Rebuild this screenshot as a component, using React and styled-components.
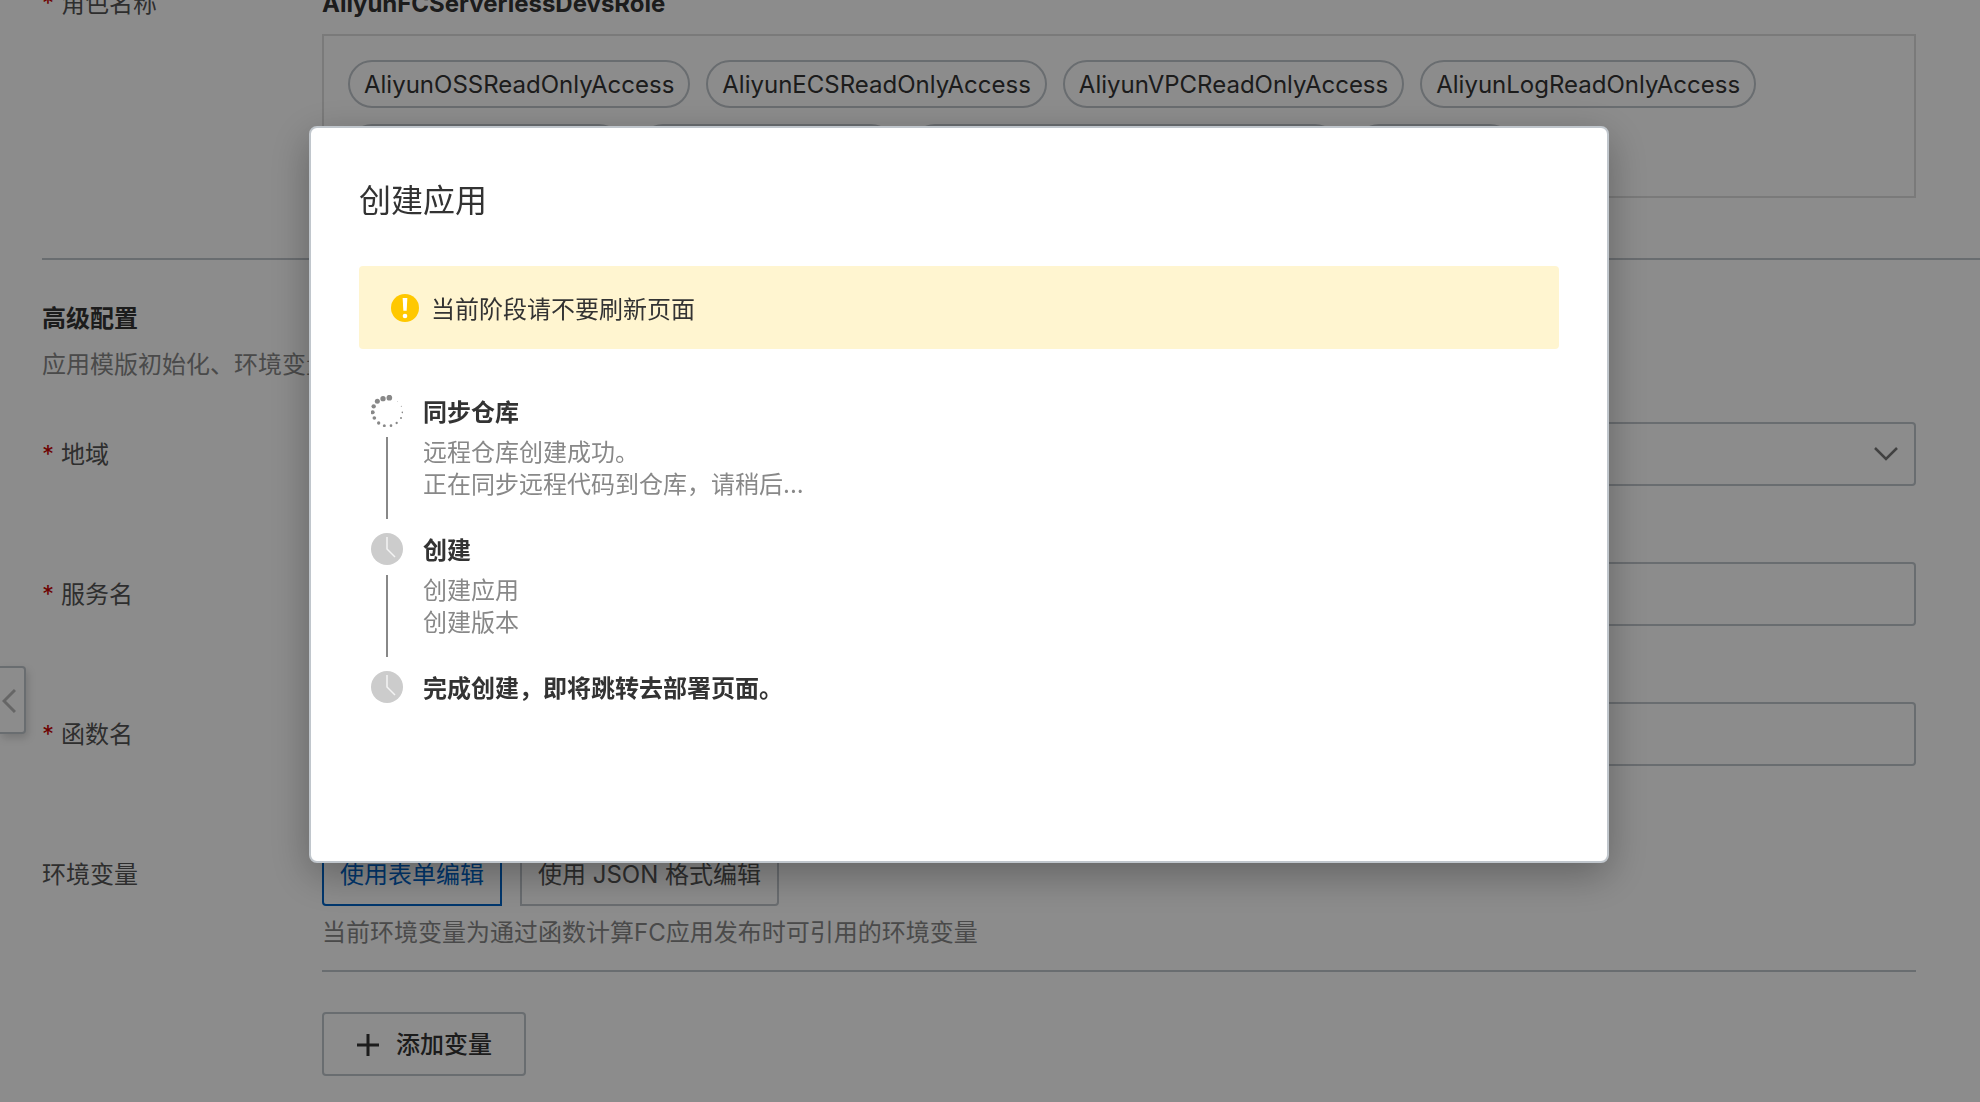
import React from "react";
import styled, { createGlobalStyle, css } from "styled-components";

const GlobalStyle = createGlobalStyle`
  *, *::before, *::after { box-sizing: border-box; }
  body {
    margin: 0;
    background: #fff;
    color: #333;
    font-family: Inter, "Noto Sans CJK SC", sans-serif;
    font-size: 24px;
    line-height: 32px;
  }
  button, input, select { font: inherit; color: inherit; }
  h1, h2, p, ul, ol, dl { margin: 0; padding: 0; }
`;

const Page = styled.main`
  position: relative;
  height: 100vh;
  overflow: hidden;
  padding-left: 42px;
`;

const Scrolled = styled.div`
  margin-top: -12px;
`;

const Row = styled.div`
  display: grid;
  grid-template-columns: 280px minmax(0, 1fr);
  align-items: start;
  padding-right: 64px;
`;

const Label = styled.label`
  display: flex;
  align-items: center;
  color: #555;
  height: ${(p) => (p.$tall ? "64px" : "32px")};
  padding-top: ${(p) => (p.$tall ? "2px" : "0")};

  ${(p) =>
    p.$required &&
    css`
      &::before {
        content: "*";
        width: 19px;
        color: #c80000;
      }
    `}
`;

const RoleName = styled.strong`
  display: block;
  font-weight: 700;
  margin-bottom: 14px;
`;

const PolicyBox = styled.ul`
  display: flex;
  flex-wrap: wrap;
  align-content: flex-start;
  gap: 16px;
  min-height: 164px;
  padding: 24px;
  border: 2px solid #dedede;
  list-style: none;
`;

const Policy = styled.li`
  height: 48px;
  padding: 7px 14px 5px;
  border: 2px solid #c0c6cc;
  border-radius: 24px;
`;

const SectionHead = styled.header`
  margin: 60px 0 41px;
  padding-top: 43px;
  border-top: 2px solid #c0c6cc;
`;

const SectionTitle = styled.h2`
  margin-bottom: 14px;
  font-size: 24px;
  line-height: 32px;
  font-weight: 600;
`;

const Muted = styled.p`
  color: #888;
`;

const Fields = styled.div`
  display: grid;
  gap: 76px;
`;

const control = css`
  width: 100%;
  height: 64px;
  padding: 0 16px;
  background: #fff;
  border: 2px solid #c0c6cc;
  border-radius: 4px;
`;

const TextInput = styled.input`
  ${control}
`;

const SelectWrap = styled.div`
  display: grid;
  align-items: center;

  > * { grid-area: 1 / 1; }
  > svg { justify-self: end; margin-right: 18px; pointer-events: none; }
`;

const Select = styled.select`
  ${control}
  appearance: none;
`;

const Modes = styled.div`
  display: flex;
  gap: 18px;
  margin-bottom: 11px;
`;

const ModeButton = styled.button`
  height: 64px;
  padding: 2px 16px 0;
  background: #fff;
  color: ${(p) => (p.$active ? "#0064c8" : "#555")};
  border: 2px solid ${(p) => (p.$active ? "#0064c8" : "#c0c6cc")};
  border-radius: ${(p) => (p.$active ? "4px 0 0 4px" : "0 4px 4px 0")};
`;

const Rule = styled.hr`
  margin: 21px 0 40px;
  border: 0;
  border-top: 2px solid #c0c6cc;
`;

const AddButton = styled.button`
  display: flex;
  align-items: center;
  gap: 16px;
  height: 64px;
  padding: 2px 32px 0;
  background: #fff;
  border: 2px solid #c0c6cc;
  border-radius: 4px;
  font-weight: 500;
`;

const CollapseTab = styled.button`
  position: absolute;
  left: 0;
  top: 666px;
  display: flex;
  align-items: center;
  width: 26px;
  height: 68px;
  padding: 2px 0 0 2px;
  background: #fff;
  border: 2px solid #c0c6cc;
  border-left: 0;
  border-radius: 0 4px 4px 0;
  box-shadow: 2px 4px 8px rgba(0, 0, 0, 0.16);
`;

const Overlay = styled.div`
  position: fixed;
  inset: 0;
  display: flex;
  justify-content: center;
  align-items: flex-start;
  padding: 126px 62px 0 0;
  background: rgba(0, 0, 0, 0.45);
`;

const Dialog = styled.section`
  width: 1300px;
  max-width: 100%;
  padding: 49px 48px 148px;
  background: #fff;
  border: 2px solid #c0c6cc;
  border-radius: 8px;
  box-shadow: 0 12px 40px rgba(0, 0, 0, 0.3);
`;

const DialogTitle = styled.h1`
  margin-bottom: 41px;
  font-size: 32px;
  line-height: 48px;
  font-weight: 400;
`;

const Alert = styled.div`
  display: flex;
  align-items: flex-start;
  gap: 12px;
  margin-bottom: 46px;
  padding: 28px 32px 23px;
  background: #fff5d0;
  border-radius: 4px;
`;

const Steps = styled.ol`
  list-style: none;
  padding-left: 12px;
`;

const Step = styled.li`
  display: grid;
  grid-template-columns: 32px 1fr;
  column-gap: 20px;

  &:not(:last-child) { min-height: 138px; }
`;

const StepRail = styled.div`
  display: flex;
  flex-direction: column;
  align-items: center;
  gap: 10px;
`;

const StepLine = styled.span`
  flex: 1;
  width: 2px;
  margin-bottom: 14px;
  background: #888;
`;

const StepBody = styled.div`
  padding-top: 2px;
`;

const StepTitle = styled.p`
  margin-bottom: 8px;
  font-weight: 600;
`;

const WarningIcon = () => (
  <svg width="28" height="28" viewBox="0 0 84 84" aria-hidden="true">
    <circle cx="42" cy="42" r="42" fill="#ffc800" />
    <path d="M35 12h14l-2 38H37z" fill="#fff" />
    <circle cx="42" cy="66" r="7" fill="#fff" />
  </svg>
);

const DOTS = [
  [55, 8, 8.5], [36, 11, 8], [19, 19, 7.5], [8, 34, 6.5], [5, 52, 6],
  [10, 69, 5.5], [23, 84, 5], [40, 92, 4.5], [60, 92, 4], [77, 84, 3.5],
  [90, 69, 3], [94, 52, 2.5], [91, 34, 1.5], [79, 20, 1],
];

const LoadingIcon = () => (
  <svg width="32" height="32" viewBox="0 0 96 96" aria-hidden="true">
    {DOTS.map(([x, y, r]) => (
      <circle key={`${x}-${y}`} cx={x} cy={y} r={r} fill="#888" />
    ))}
  </svg>
);

const ClockIcon = () => (
  <svg width="32" height="32" viewBox="0 0 96 96" aria-hidden="true">
    <circle cx="48" cy="48" r="48" fill="#ccc" />
    <path d="M48 12v36l24 24" fill="none" stroke="#f4f4f4" strokeWidth="4.5" />
  </svg>
);

const ChevronDown = () => (
  <svg width="24" height="14" viewBox="0 0 24 14" aria-hidden="true">
    <path d="M1 1l11 11L23 1" fill="none" stroke="#777" strokeWidth="2.5" />
  </svg>
);

const ChevronLeft = () => (
  <svg width="14" height="24" viewBox="0 0 14 24" aria-hidden="true">
    <path d="M13 1L2 12l11 11" fill="none" stroke="#bbb" strokeWidth="3" />
  </svg>
);

const PlusIcon = () => (
  <svg width="24" height="24" viewBox="0 0 24 24" aria-hidden="true">
    <path d="M12 1v22M1 12h22" fill="none" stroke="#333" strokeWidth="3" />
  </svg>
);

const POLICIES = [
  "AliyunOSSReadOnlyAccess",
  "AliyunECSReadOnlyAccess",
  "AliyunVPCReadOnlyAccess",
  "AliyunLogReadOnlyAccess",
  "AliyunNASFullAccess",
  "AliyunFCFullAccess",
  "AliyunContainerRegistryFullAccess",
  "AliyunDevs",
];

const STEPS = [
  {
    title: "同步仓库",
    lines: ["远程仓库创建成功。", "正在同步远程代码到仓库，请稍后..."],
    Icon: LoadingIcon,
  },
  { title: "创建", lines: ["创建应用", "创建版本"], Icon: ClockIcon },
  { title: "完成创建，即将跳转去部署页面。", lines: [], Icon: ClockIcon },
];

export default function App() {
  return (
    <>
      <GlobalStyle />
      <Page>
        <Scrolled>
          <Row>
            <Label as="span" $required>角色名称</Label>
            <div>
              <RoleName>AliyunFCServerlessDevsRole</RoleName>
              <PolicyBox>
                {POLICIES.map((name) => (
                  <Policy key={name}>{name}</Policy>
                ))}
              </PolicyBox>
            </div>
          </Row>

          <SectionHead>
            <SectionTitle>高级配置</SectionTitle>
            <Muted>应用模版初始化、环境变量</Muted>
          </SectionHead>

          <Fields>
            <Row>
              <Label htmlFor="region" $required $tall>地域</Label>
              <SelectWrap>
                <Select id="region" />
                <ChevronDown />
              </SelectWrap>
            </Row>
            <Row>
              <Label htmlFor="service" $required $tall>服务名</Label>
              <TextInput id="service" />
            </Row>
            <Row>
              <Label htmlFor="function" $required $tall>函数名</Label>
              <TextInput id="function" />
            </Row>
            <Row>
              <Label as="span" $tall>环境变量</Label>
              <div>
                <Modes>
                  <ModeButton type="button" $active>使用表单编辑</ModeButton>
                  <ModeButton type="button">使用 JSON 格式编辑</ModeButton>
                </Modes>
                <Muted>当前环境变量为通过函数计算FC应用发布时可引用的环境变量</Muted>
                <Rule />
                <AddButton type="button">
                  <PlusIcon />
                  添加变量
                </AddButton>
              </div>
            </Row>
          </Fields>
        </Scrolled>
        <CollapseTab type="button" aria-label="收起">
          <ChevronLeft />
        </CollapseTab>
      </Page>

      <Overlay>
        <Dialog role="dialog" aria-modal="true" aria-labelledby="dialog-title">
          <DialogTitle id="dialog-title">创建应用</DialogTitle>
          <Alert role="alert">
            <WarningIcon />
            <p>当前阶段请不要刷新页面</p>
          </Alert>
          <Steps>
            {STEPS.map(({ title, lines, Icon }, i) => (
              <Step key={title}>
                <StepRail>
                  <Icon />
                  {i < STEPS.length - 1 && <StepLine />}
                </StepRail>
                <StepBody>
                  <StepTitle>{title}</StepTitle>
                  {lines.map((line) => (
                    <Muted key={line}>{line}</Muted>
                  ))}
                </StepBody>
              </Step>
            ))}
          </Steps>
        </Dialog>
      </Overlay>
    </>
  );
}
